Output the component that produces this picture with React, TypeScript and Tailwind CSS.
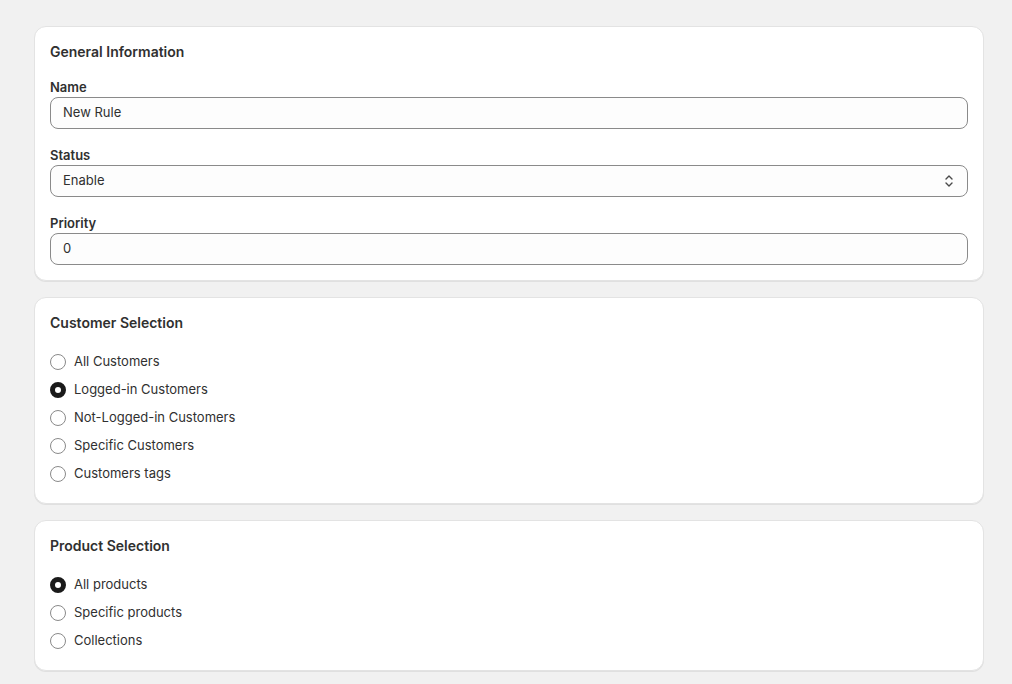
const font = { fontFamily: 'Inter, "Noto Sans", sans-serif' };

function Field({ label, value, select }: { label: string; value: string; select?: boolean }) {
  return (
    <div className="flex flex-col">
      <label className="text-[13px] leading-5 font-semibold text-[#303030]">{label}</label>
      <div className="h-8 flex items-center justify-between rounded-lg border border-[#8a8a8a] bg-[#fdfdfd] px-3 text-[13px] text-[#303030]">
        <span>{value}</span>
        {select && (
          <svg width="12" height="16" viewBox="0 0 12 16" fill="none" stroke="#4a4a4a" strokeWidth="1.4" strokeLinecap="round" strokeLinejoin="round">
            <path d="M3 6l3-3 3 3M3 10l3 3 3-3" />
          </svg>
        )}
      </div>
    </div>
  );
}

function Radio({ label, checked }: { label: string; checked?: boolean }) {
  return (
    <div className="h-7 flex items-center gap-2">
      <span
        className={
          'w-4 h-4 rounded-full bg-white box-border ' +
          (checked ? 'border-[5px] border-[#1a1a1a]' : 'border border-[#8a8a8a]')
        }
      />
      <span className="text-[13px] text-[#303030]">{label}</span>
    </div>
  );
}

function Card({ title, children, gap }: { title: string; children: React.ReactNode; gap: string }) {
  return (
    <div className="bg-white rounded-xl border border-[#e3e3e3] shadow-[0_1px_0_rgba(0,0,0,0.07)] p-[15px]">
      <h2 className="text-sm leading-5 font-semibold text-[#303030]">{title}</h2>
      <div className={gap}>{children}</div>
    </div>
  );
}

export default function App() {
  return (
    <div style={font} className="min-h-screen bg-[#f1f1f1] pt-[26px] pl-[34px] pr-[28px] flex flex-col gap-4">
      <Card title="General Information" gap="mt-[15px] flex flex-col gap-4">
        <Field label="Name" value="New Rule" />
        <Field label="Status" value="Enable" select />
        <Field label="Priority" value="0" />
      </Card>
      <Card title="Customer Selection" gap="mt-[15px] flex flex-col">
        <Radio label="All Customers" />
        <Radio label="Logged-in Customers" checked />
        <Radio label="Not-Logged-in Customers" />
        <Radio label="Specific Customers" />
        <Radio label="Customers tags" />
      </Card>
      <Card title="Product Selection" gap="mt-[15px] flex flex-col">
        <Radio label="All products" checked />
        <Radio label="Specific products" />
        <Radio label="Collections" />
      </Card>
    </div>
  );
}
